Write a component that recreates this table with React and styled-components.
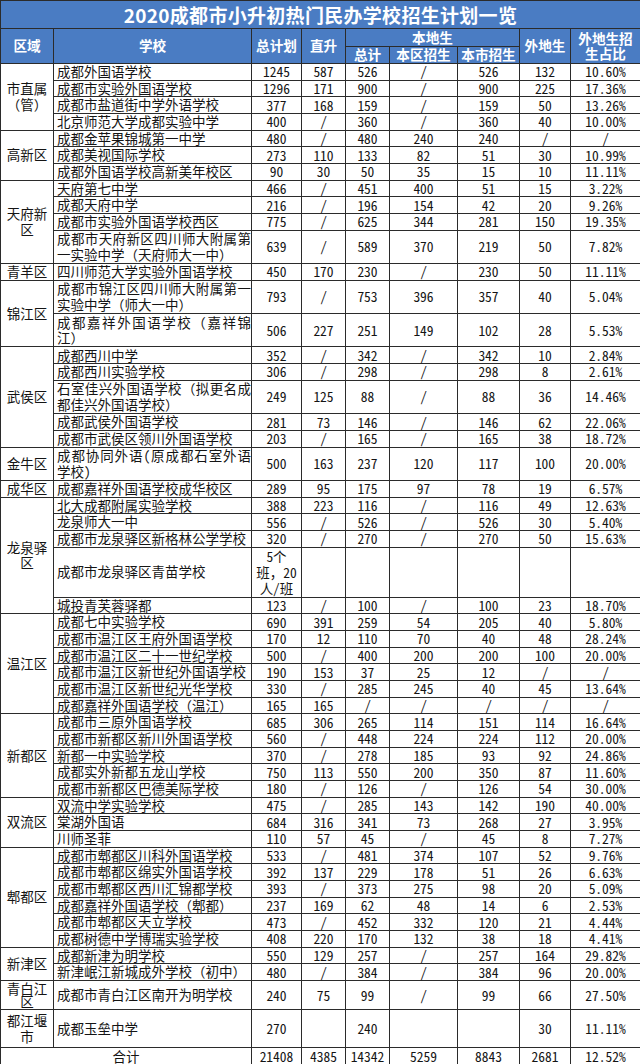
import React from "react";
import styled, { createGlobalStyle } from "styled-components";

const GlobalStyle = createGlobalStyle`
  html, body {
    margin: 0;
    padding: 0;
    background: #fff;
  }
`;

const U = 16.68;

const r = (name, vals, h = U) => ({
  name,
  vals: vals.split(" ").map((v) => (v === "_" ? "" : v)),
  h,
});

const groups = [
  {
    region: "市直属（管）",
    rows: [
      r("成都外国语学校", "1245 587 526 / 526 132 10.60%"),
      r("成都市实验外国语学校", "1296 171 900 / 900 225 17.36%"),
      r("成都市盐道街中学外语学校", "377 168 159 / 159 50 13.26%"),
      r("北京师范大学成都实验中学", "400 / 360 / 360 40 10.00%"),
    ],
  },
  {
    region: "高新区",
    rows: [
      r("成都金苹果锦城第一中学", "480 / 480 240 240 / /"),
      r("成都美视国际学校", "273 110 133 82 51 30 10.99%"),
      r("成都外国语学校高新美年校区", "90 30 50 35 15 10 11.11%"),
    ],
  },
  {
    region: "天府新区",
    rows: [
      r("天府第七中学", "466 / 451 400 51 15 3.22%"),
      r("成都天府中学", "216 / 196 154 42 20 9.26%"),
      r("成都市实验外国语学校西区", "775 / 625 344 281 150 19.35%"),
      r("成都市天府新区四川师大附属第一实验中学（天府师大一中）", "639 / 589 370 219 50 7.82%", U * 2),
    ],
  },
  {
    region: "青羊区",
    rows: [r("四川师范大学实验外国语学校", "450 170 230 / 230 50 11.11%")],
  },
  {
    region: "锦江区",
    rows: [
      r("成都市锦江区四川师大附属第一实验中学（师大一中）", "793 / 753 396 357 40 5.04%", U * 2),
      r("成都嘉祥外国语学校（嘉祥锦江）", "506 227 251 149 102 28 5.53%", U * 2),
    ],
  },
  {
    region: "武侯区",
    rows: [
      r("成都西川中学", "352 / 342 / 342 10 2.84%"),
      r("成都西川实验学校", "306 / 298 / 298 8 2.61%"),
      r("石室佳兴外国语学校（拟更名成都佳兴外国语学校）", "249 125 88 / 88 36 14.46%", U * 2),
      r("成都武侯外国语学校", "281 73 146 / 146 62 22.06%"),
      r("成都市武侯区领川外国语学校", "203 / 165 / 165 38 18.72%"),
    ],
  },
  {
    region: "金牛区",
    rows: [r("成都协同外语(原成都石室外语学校)", "500 163 237 120 117 100 20.00%", U * 2)],
  },
  {
    region: "成华区",
    rows: [r("成都嘉祥外国语学校成华校区", "289 95 175 97 78 19 6.57%")],
  },
  {
    region: "龙泉驿区",
    rows: [
      r("北大成都附属实验学校", "388 223 116 / 116 49 12.63%"),
      r("龙泉师大一中", "556 / 526 / 526 30 5.40%"),
      r("成都市龙泉驿区新格林公学学校", "320 / 270 / 270 50 15.63%"),
      r("成都市龙泉驿区青苗学校", "5个|班，20|人/班 _ _ _ _ _ _", U * 3),
      r("城投青芙蓉驿都", "123 / 100 / 100 23 18.70%"),
    ],
  },
  {
    region: "温江区",
    rows: [
      r("成都七中实验学校", "690 391 259 54 205 40 5.80%"),
      r("成都市温江区王府外国语学校", "170 12 110 70 40 48 28.24%"),
      r("成都市温江区二十一世纪学校", "500 / 400 200 200 100 20.00%"),
      r("成都市温江区新世纪外国语学校", "190 153 37 25 12 / /"),
      r("成都市温江区新世纪光华学校", "330 / 285 245 40 45 13.64%"),
      r("成都嘉祥外国语学校（温江）", "165 165 / / / / /"),
    ],
  },
  {
    region: "新都区",
    rows: [
      r("成都市三原外国语学校", "685 306 265 114 151 114 16.64%"),
      r("成都市新都区新川外国语学校", "560 / 448 224 224 112 20.00%"),
      r("新都一中实验学校", "370 / 278 185 93 92 24.86%"),
      r("成都实外新都五龙山学校", "750 113 550 200 350 87 11.60%"),
      r("成都市新都区巴德美际学校", "180 / 126 / 126 54 30.00%"),
    ],
  },
  {
    region: "双流区",
    rows: [
      r("双流中学实验学校", "475 / 285 143 142 190 40.00%"),
      r("棠湖外国语", "684 316 341 73 268 27 3.95%"),
      r("川师圣菲", "110 57 45 / 45 8 7.27%"),
    ],
  },
  {
    region: "郫都区",
    rows: [
      r("成都市郫都区川科外国语学校", "533 / 481 374 107 52 9.76%"),
      r("成都市郫都区绵实外国语学校", "392 137 229 178 51 26 6.63%"),
      r("成都市郫都区西川汇锦都学校", "393 / 373 275 98 20 5.09%"),
      r("成都嘉祥外国语学校（郫都）", "237 169 62 48 14 6 2.53%"),
      r("成都市郫都区天立学校", "473 / 452 332 120 21 4.44%"),
      r("成都树德中学博瑞实验学校", "408 220 170 132 38 18 4.41%"),
    ],
  },
  {
    region: "新津区",
    rows: [
      r("成都新津为明学校", "550 129 257 / 257 164 29.82%"),
      r("新津岷江新城成外学校（初中）", "480 / 384 / 384 96 20.00%"),
    ],
  },
  {
    region: "青白江区",
    lh: 13.5,
    rows: [r("成都市青白江区南开为明学校", "240 75 99 / 99 66 27.50%", 29)],
  },
  {
    region: "都江堰市",
    rows: [r("成都玉垒中学", "270 _ 240 _ _ 30 11.11%", 38)],
  },
];

const totals = ["21408", "4385", "14342", "5259", "8843", "2681", "12.52%"];

const widths = [53, 198, 50, 44, 44, 68, 62, 51, 70];

const LINE = "#2b2b2b";
const BLUE = "#4a7cc3";
const FONT = `"Noto Sans Mono CJK SC", "Noto Sans CJK SC", "DejaVu Sans", sans-serif`;

const Table = styled.table`
  width: 640px;
  border-collapse: collapse;
  table-layout: fixed;
  font-family: ${FONT};
  font-size: 13.5px;
  color: #141414;
  line-height: 15px;
`;

const Row = styled.tr`
  height: ${(p) => p.$h}px;
`;

const TitleCell = styled.th`
  background: ${BLUE};
  color: #fff;
  font-family: "Noto Sans CJK SC", sans-serif;
  font-size: 19px;
  line-height: 22px;
  font-weight: 700;
  letter-spacing: 0.3px;
  text-align: center;
  border: 1px solid ${LINE};
  padding: 0;
`;

const HeadCell = styled.th`
  background: ${BLUE};
  color: #fff;
  font-weight: 700;
  font-size: 13.6px;
  line-height: 15.5px;
  text-align: center;
  border: 1px solid ${LINE};
  padding: 0 3px;
`;

const Cell = styled.td`
  border: 1px solid ${LINE};
  padding: 0;
  vertical-align: middle;
`;

const RegionCell = styled(Cell)`
  text-align: center;
  padding: 0 4px;
  line-height: ${(p) => p.$lh || 15.5}px;
`;

const NameCell = styled(Cell)`
  padding: 0 0 0 3px;
  text-align: justify;
  text-align-last: left;
  line-height: 15.5px;
`;

const NumCell = styled(Cell)`
  text-align: center;
  line-height: ${(p) => (p.$stack ? "16px" : "15px")};
`;

const TotalLabel = styled(Cell)`
  text-align: center;
`;

export default function App() {
  const body = groups.flatMap((g, gi) =>
    g.rows.map((row, i) => (
      <Row key={`${gi}-${i}`} $h={row.h}>
        {i === 0 && (
          <RegionCell rowSpan={g.rows.length} $lh={g.lh}>
            {g.region}
          </RegionCell>
        )}
        <NameCell>{row.name}</NameCell>
        {row.vals.map((v, j) => {
          const parts = v.split("|");
          return (
            <NumCell key={j} $stack={parts.length > 1}>
              {parts.map((p, k) => (
                <React.Fragment key={k}>
                  {k > 0 && <br />}
                  {p}
                </React.Fragment>
              ))}
            </NumCell>
          );
        })}
      </Row>
    ))
  );

  return (
    <>
      <GlobalStyle />
      <Table>
        <colgroup>
          {widths.map((w, i) => (
            <col key={i} style={{ width: w }} />
          ))}
        </colgroup>
        <thead>
          <Row $h={28}>
            <TitleCell colSpan={9}>2020成都市小升初热门民办学校招生计划一览</TitleCell>
          </Row>
          <Row $h={18}>
            <HeadCell rowSpan={2}>区域</HeadCell>
            <HeadCell rowSpan={2}>学校</HeadCell>
            <HeadCell rowSpan={2}>总计划</HeadCell>
            <HeadCell rowSpan={2}>直升</HeadCell>
            <HeadCell colSpan={3}>本地生</HeadCell>
            <HeadCell rowSpan={2}>外地生</HeadCell>
            <HeadCell rowSpan={2}>外地生招生占比</HeadCell>
          </Row>
          <Row $h={17}>
            <HeadCell>总计</HeadCell>
            <HeadCell>本区招生</HeadCell>
            <HeadCell>本市招生</HeadCell>
          </Row>
        </thead>
        <tbody>
          {body}
          <Row $h={17}>
            <TotalLabel colSpan={2}>合计</TotalLabel>
            {totals.map((t, i) => (
              <NumCell key={i}>{t}</NumCell>
            ))}
          </Row>
        </tbody>
      </Table>
    </>
  );
}
